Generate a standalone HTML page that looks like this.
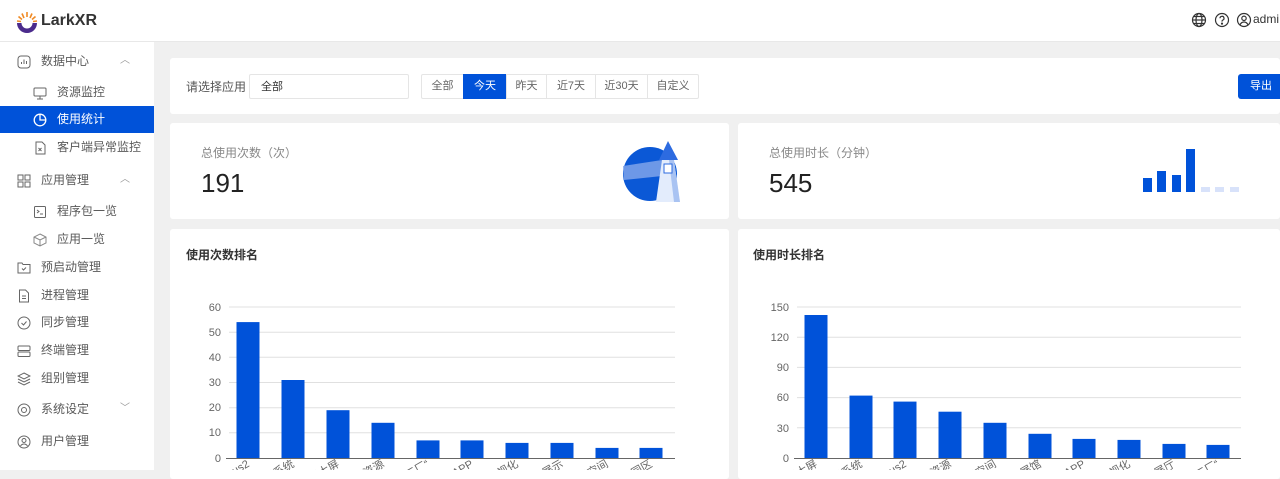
<!DOCTYPE html>
<html><head><meta charset="utf-8"><style>
*{margin:0;padding:0;box-sizing:border-box}
body{width:1280px;height:470px;overflow:hidden;background:#f0f0f0;font-family:"Liberation Sans","Noto Sans CJK SC",sans-serif;position:relative;color:#333}
.abs{position:absolute}
.hdr{left:0;top:0;width:1280px;height:42px;background:#fff;border-bottom:1px solid #e8e8e8}
.side{left:0;top:42px;width:154px;height:428px;background:#fff}
.card{background:#fff;border-radius:3px;position:absolute}
.mi{position:absolute;left:0;width:154px;height:27px;font-size:12px;color:#595959;line-height:27px}
.mi .t{position:absolute;left:41px}
.mi.sub .t{left:57px}
.mi.act{background:#0052d9;color:#fff}
.ic{position:absolute;top:7px;left:17px;width:14px;height:14px}
.mi.sub .ic{left:33px}
.btn{position:absolute;top:74px;height:25px;border:1px solid #e5e5e5;font-size:11px;color:#666;text-align:center;line-height:23px;background:#fff}
</style></head><body>
<div class="abs hdr"></div>
<svg class="abs" style="left:14px;top:9px" width="26" height="26" viewBox="0 0 26 26">
<g stroke="#f08a24" stroke-width="1.6">
<line x1="13" y1="3" x2="13" y2="8"/><line x1="8" y1="4.5" x2="10" y2="9"/><line x1="18" y1="4.5" x2="16" y2="9"/><line x1="4.5" y1="7.5" x2="8" y2="10.5"/><line x1="21.5" y1="7.5" x2="18" y2="10.5"/><line x1="3" y1="12" x2="7" y2="12.5"/><line x1="23" y1="12" x2="19" y2="12.5"/></g>
<path d="M3 14 A10 10 0 0 0 23 14 L18.5 14 A5.5 5.5 0 0 1 7.5 14Z" fill="#4b2b8c"/></svg>
<div class="abs" style="left:41px;top:12px;font-size:16px;font-weight:bold;color:#333">LarkXR</div>
<svg class="abs" style="left:1191px;top:12px" width="80" height="16" viewBox="0 0 80 16" fill="none" stroke="#333" stroke-width="1.2">
<circle cx="8" cy="8" r="6.5"/><ellipse cx="8" cy="8" rx="3" ry="6.5"/><line x1="1.5" y1="8" x2="14.5" y2="8"/><line x1="2.5" y1="4.5" x2="13.5" y2="4.5"/><line x1="2.5" y1="11.5" x2="13.5" y2="11.5"/>
<circle cx="31" cy="8" r="6.5"/><path d="M29 6.3a2 2 0 1 1 2.6 1.9c-.6.3-.6.7-.6 1.4"/><circle cx="31" cy="11.6" r=".5" fill="#333"/>
<circle cx="53" cy="8" r="6.5"/><circle cx="53" cy="6.3" r="2.2"/><path d="M49 12.8c1-2 2.4-2.8 4-2.8s3 .8 4 2.8"/></svg>
<div class="abs" style="left:1253px;top:12px;font-size:12px;color:#333">admi</div>

<div class="abs side"></div>
<div class="mi" style="top:48px"><svg class="ic" viewBox="0 0 14 14" fill="none" stroke="#666"><rect x="1" y="1" width="12" height="12" rx="3"/><path d="M4.5 9V7M7 9V4.5M9.5 9V6"/></svg><span class="t">数据中心</span><span style="position:absolute;left:120px;top:-1px;color:#999;font-size:10px">︿</span></div>
<div class="mi sub" style="top:79px"><svg class="ic" viewBox="0 0 14 14" fill="none" stroke="#666"><rect x="1" y="2" width="12" height="8" rx="1"/><path d="M7 10v3M4 13h6"/></svg><span class="t">资源监控</span></div>
<div class="mi sub act" style="top:106px"><svg class="ic" viewBox="0 0 14 14" fill="none" stroke="#fff" stroke-width="1.3"><circle cx="7" cy="7" r="5.8"/><path d="M7 1.2V7h5.8"/></svg><span class="t">使用统计</span></div>
<div class="mi sub" style="top:134px"><svg class="ic" viewBox="0 0 14 14" fill="none" stroke="#666"><path d="M3 1h6l3 3v9H3z"/><path d="M5.5 7l3 3M8.5 7l-3 3"/></svg><span class="t">客户端异常监控</span></div>
<div class="mi" style="top:167px"><svg class="ic" viewBox="0 0 14 14" fill="none" stroke="#666"><rect x="1" y="1" width="5" height="5"/><rect x="8" y="1" width="5" height="5"/><rect x="1" y="8" width="5" height="5"/><rect x="8" y="8" width="5" height="5"/></svg><span class="t">应用管理</span><span style="position:absolute;left:120px;top:-1px;color:#999;font-size:10px">︿</span></div>
<div class="mi sub" style="top:198px"><svg class="ic" viewBox="0 0 14 14" fill="none" stroke="#666"><rect x="1.5" y="1.5" width="11" height="11" rx="1"/><path d="M4 5l2 1.5L4 8M7 9h3"/></svg><span class="t">程序包一览</span></div>
<div class="mi sub" style="top:226px"><svg class="ic" viewBox="0 0 14 14" fill="none" stroke="#888"><path d="M7 1l6 3v6l-6 3-6-3V4z M1 4l6 3 6-3M7 7v6"/></svg><span class="t">应用一览</span></div>
<div class="mi" style="top:254px"><svg class="ic" viewBox="0 0 14 14" fill="none" stroke="#666"><path d="M1 2h4l1 1.5h7V12H1z"/><path d="M5 7.5l1.5 1.5L9 6.5"/></svg><span class="t">预启动管理</span></div>
<div class="mi" style="top:282px"><svg class="ic" viewBox="0 0 14 14" fill="none" stroke="#666"><path d="M2.5 1h6l3 3v9h-9z"/><path d="M5 7h4M5 9.5h4"/></svg><span class="t">进程管理</span></div>
<div class="mi" style="top:309px"><svg class="ic" viewBox="0 0 14 14" fill="none" stroke="#666"><circle cx="7" cy="7" r="6"/><path d="M4.5 7l2 2 3-3.5"/></svg><span class="t">同步管理</span></div>
<div class="mi" style="top:337px"><svg class="ic" viewBox="0 0 14 14" fill="none" stroke="#666"><rect x="1" y="2" width="12" height="4.5" rx="1"/><rect x="1" y="8" width="12" height="4.5" rx="1"/></svg><span class="t">终端管理</span></div>
<div class="mi" style="top:365px"><svg class="ic" viewBox="0 0 14 14" fill="none" stroke="#666"><path d="M7 1l6 3-6 3-6-3z M1 7l6 3 6-3M1 10l6 3 6-3"/></svg><span class="t">组别管理</span></div>
<div class="mi" style="top:396px"><svg class="ic" viewBox="0 0 14 14" fill="none" stroke="#666"><circle cx="7" cy="7" r="6"/><circle cx="7" cy="7" r="2.5"/></svg><span class="t">系统设定</span><span style="position:absolute;left:120px;top:-1px;color:#999;font-size:10px">﹀</span></div>
<div class="mi" style="top:428px"><svg class="ic" viewBox="0 0 14 14" fill="none" stroke="#666"><circle cx="7" cy="7" r="6"/><circle cx="7" cy="5.5" r="2"/><path d="M3.5 11c1-1.5 2-2 3.5-2s2.5.5 3.5 2"/></svg><span class="t">用户管理</span></div>

<div class="card" style="left:170px;top:58px;width:1110px;height:56px"></div>
<div class="abs" style="left:186px;top:78px;font-size:12px;color:#555">请选择应用</div>
<div class="abs" style="left:249px;top:74px;width:160px;height:25px;border:1px solid #e5e5e5;border-radius:2px;font-size:11px;line-height:25px;padding-left:11px;color:#333">全部</div>
<div class="btn" style="left:421px;width:43px;border-radius:2px 0 0 2px">全部</div>
<div class="btn" style="left:463px;width:44px;background:#0052d9;border-color:#0052d9;color:#fff">今天</div>
<div class="btn" style="left:506px;width:41px">昨天</div>
<div class="btn" style="left:546px;width:50px">近7天</div>
<div class="btn" style="left:595px;width:53px">近30天</div>
<div class="btn" style="left:647px;width:52px;border-radius:0 2px 2px 0">自定义</div>
<div class="abs" style="left:1238px;top:74px;width:42px;height:25px;background:#0052d9;border-radius:3px 0 0 3px;color:#fff;font-size:11px;line-height:25px;padding-left:12px">导出</div>

<div class="card" style="left:170px;top:123px;width:559px;height:96px"></div>
<div class="card" style="left:738px;top:123px;width:542px;height:96px"></div>
<div class="abs" style="left:201px;top:144px;font-size:12px;color:#888">总使用次数（次）</div>
<div class="abs" style="left:201px;top:168px;font-size:26px;color:#222">191</div>
<div class="abs" style="left:769px;top:144px;font-size:12px;color:#888">总使用时长（分钟）</div>
<div class="abs" style="left:769px;top:168px;font-size:26px;color:#222">545</div>
<svg class="abs" style="left:618px;top:136px" width="70" height="70" viewBox="0 0 70 70">
<circle cx="32" cy="38" r="27" fill="#0b58d6"/>
<path d="M5 30 L44 24 L44 40 L6 44Z" fill="#7fa3ea" opacity=".85"/>
<path d="M44 24 L56 24 L62 66 L38 66Z" fill="#e3ecfc"/>
<path d="M51 24 L56 24 L62 66 L56 66Z" fill="#a9c3f2"/>
<path d="M41 24 L50 5 L60 24Z" fill="#2d6be0"/>
<rect x="46" y="28" width="8" height="9" fill="#fff" stroke="#2d6be0" stroke-width="1"/>
</svg>
<svg class="abs" style="left:1140px;top:148px" width="105" height="45">
<rect x="3" y="30" width="9" height="14" fill="#0052d9"/><rect x="17" y="23" width="9" height="21" fill="#0052d9"/><rect x="32" y="27" width="9" height="17" fill="#0052d9"/><rect x="46" y="1" width="9" height="43" fill="#0052d9"/>
<rect x="61" y="39" width="9" height="5" fill="#d8e2fa"/><rect x="75" y="39" width="9" height="5" fill="#d8e2fa"/><rect x="90" y="39" width="9" height="5" fill="#d8e2fa"/></svg>

<div class="card" style="left:170px;top:229px;width:559px;height:250px"></div>
<div class="card" style="left:738px;top:229px;width:542px;height:250px"></div>
<div class="abs" style="left:186px;top:246px;font-size:12px;font-weight:bold;color:#333">使用次数排名</div>
<div class="abs" style="left:753px;top:246px;font-size:12px;font-weight:bold;color:#333">使用时长排名</div>

<svg class="abs" style="left:0;top:0" width="1280" height="470" font-size="11" fill="#666" font-family="Liberation Sans, Noto Sans CJK SC, sans-serif">
<g stroke="#e0e0e0"><line x1="229" x2="675" y1="307" y2="307"/><line x1="229" x2="675" y1="332.2" y2="332.2"/><line x1="229" x2="675" y1="357.3" y2="357.3"/><line x1="229" x2="675" y1="382.5" y2="382.5"/><line x1="229" x2="675" y1="407.7" y2="407.7"/><line x1="229" x2="675" y1="432.8" y2="432.8"/>
<line x1="797" x2="1241" y1="307" y2="307"/><line x1="797" x2="1241" y1="337.2" y2="337.2"/><line x1="797" x2="1241" y1="367.4" y2="367.4"/><line x1="797" x2="1241" y1="397.6" y2="397.6"/><line x1="797" x2="1241" y1="427.8" y2="427.8"/></g>
<g text-anchor="end"><text x="221" y="311">60</text><text x="221" y="336">50</text><text x="221" y="361">40</text><text x="221" y="386">30</text><text x="221" y="411">20</text><text x="221" y="436">10</text><text x="221" y="462">0</text>
<text x="789" y="311">150</text><text x="789" y="341">120</text><text x="789" y="371">90</text><text x="789" y="401">60</text><text x="789" y="432">30</text><text x="789" y="462">0</text></g>
<g fill="#0052d9">
<rect x="236.5" y="322.1" width="23" height="135.9"/><rect x="281.5" y="380" width="23" height="78"/><rect x="326.5" y="410.2" width="23" height="47.8"/><rect x="371.5" y="422.8" width="23" height="35.2"/><rect x="416.5" y="440.4" width="23" height="17.6"/><rect x="460.5" y="440.4" width="23" height="17.6"/><rect x="505.5" y="442.9" width="23" height="15.1"/><rect x="550.5" y="442.9" width="23" height="15.1"/><rect x="595.5" y="447.9" width="23" height="10.1"/><rect x="639.5" y="447.9" width="23" height="10.1"/>
<rect x="804.5" y="315" width="23" height="143"/><rect x="849.5" y="395.6" width="23" height="62.4"/><rect x="893.5" y="401.6" width="23" height="56.4"/><rect x="938.5" y="411.7" width="23" height="46.3"/><rect x="983.5" y="422.8" width="23" height="35.2"/><rect x="1028.5" y="433.8" width="23" height="24.2"/><rect x="1072.5" y="438.9" width="23" height="19.1"/><rect x="1117.5" y="439.9" width="23" height="18.1"/><rect x="1162.5" y="443.9" width="23" height="14.1"/><rect x="1206.5" y="444.9" width="23" height="13.1"/></g>
<g stroke="#666"><line x1="226" x2="675" y1="458.5" y2="458.5"/><line x1="794" x2="1241" y1="458.5" y2="458.5"/></g>
<g text-anchor="end">
<text transform="translate(250,466) rotate(-30)">Nexus2</text><text transform="translate(295,466) rotate(-30)">管理系统</text><text transform="translate(340,466) rotate(-30)">数据大屏</text><text transform="translate(385,466) rotate(-30)">数字资源</text><text transform="translate(430,466) rotate(-30)">智慧工厂“</text><text transform="translate(474,466) rotate(-30)">展示APP</text><text transform="translate(519,466) rotate(-30)">三维可视化</text><text transform="translate(564,466) rotate(-30)">产品展示</text><text transform="translate(609,466) rotate(-30)">虚拟空间</text><text transform="translate(653,466) rotate(-30)">智慧园区</text>
<text transform="translate(818,466) rotate(-30)">数据大屏</text><text transform="translate(863,466) rotate(-30)">管理系统</text><text transform="translate(907,466) rotate(-30)">Nexus2</text><text transform="translate(952,466) rotate(-30)">数字资源</text><text transform="translate(997,466) rotate(-30)">虚拟空间</text><text transform="translate(1042,466) rotate(-30)">数字展馆</text><text transform="translate(1086,466) rotate(-30)">展示APP</text><text transform="translate(1131,466) rotate(-30)">三维可视化</text><text transform="translate(1176,466) rotate(-30)">虚拟展厅</text><text transform="translate(1220,466) rotate(-30)">智慧工厂“</text></g>
</svg>
</body></html>
